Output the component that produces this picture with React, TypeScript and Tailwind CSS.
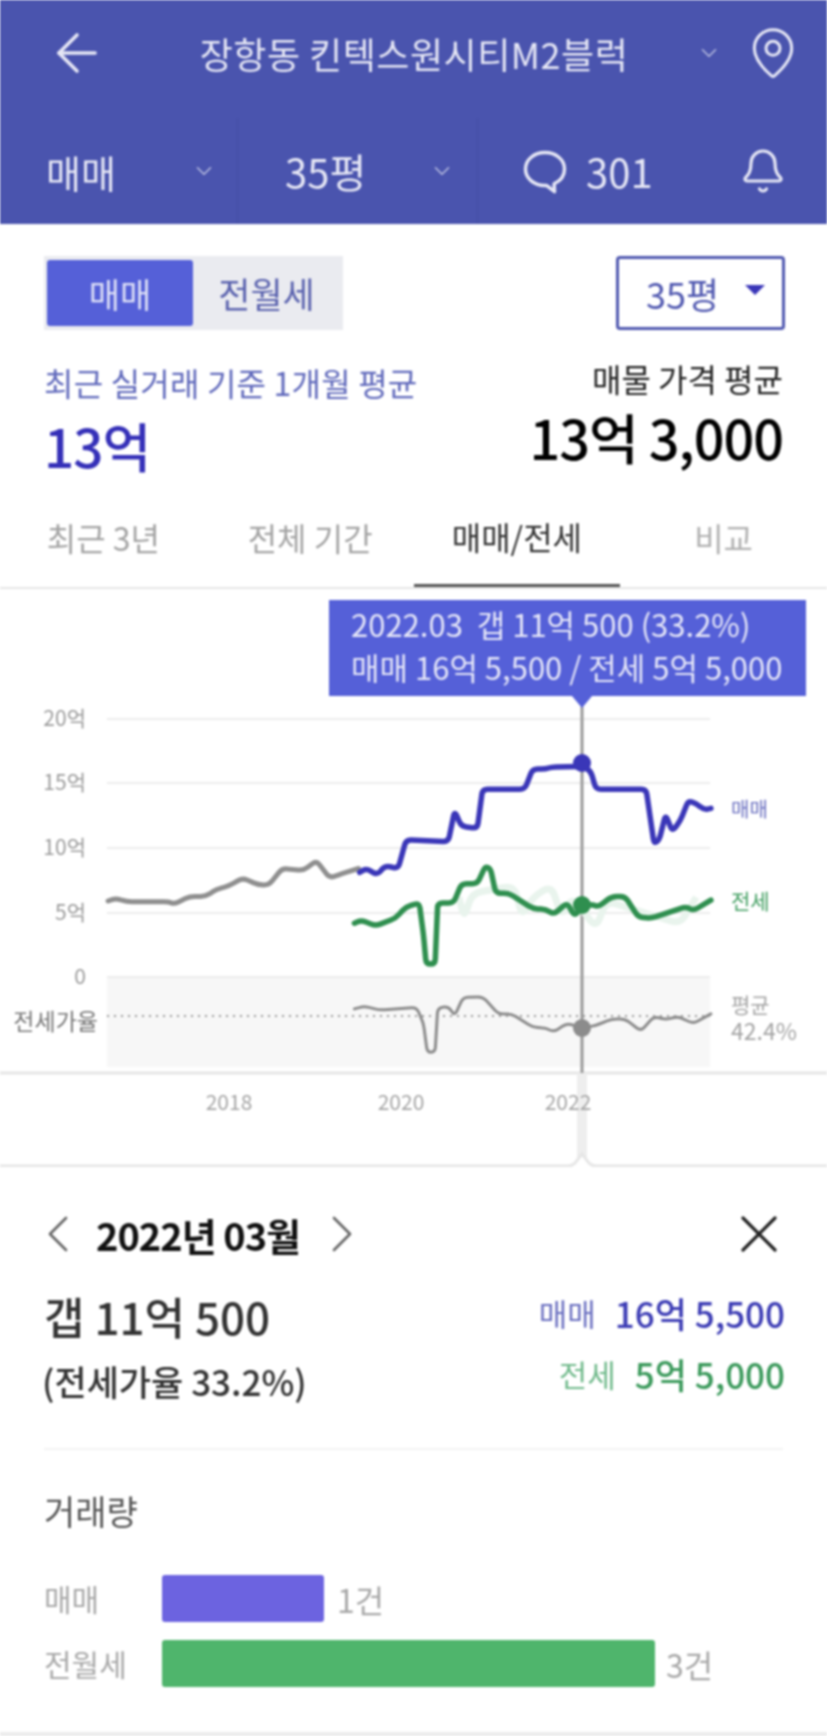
import { ArrowLeft, Bell, ChevronDown, ChevronLeft, ChevronRight, MapPin, X } from "lucide-react";

// chart points are measured off the reference crop, toPath moves them into svg space and rounds the corners
const toPath = (pts: number[][], r = 5) => {
  const p = pts.map(([x, y]) => [x * 0.5274, y * 0.3827 + 2]);
  let d = `M${p[0][0].toFixed(1)} ${p[0][1].toFixed(1)}`;
  for (let i = 1; i < p.length - 1; i++) {
    const [x, y] = p[i];
    const [ax, ay] = p[i - 1];
    const [bx, by] = p[i + 1];
    const la = Math.hypot(x - ax, y - ay);
    const lb = Math.hypot(bx - x, by - y);
    const ra = Math.min(r, la / 2) / la;
    const rb = Math.min(r, lb / 2) / lb;
    d += `L${(x + (ax - x) * ra).toFixed(1)} ${(y + (ay - y) * ra).toFixed(1)}`;
    d += `Q${x.toFixed(1)} ${y.toFixed(1)} ${(x + (bx - x) * rb).toFixed(1)} ${(y + (by - y) * rb).toFixed(1)}`;
  }
  const last = p[p.length - 1];
  return `${d}L${last[0].toFixed(1)} ${last[1].toFixed(1)}`;
};

const blueLine = [[682,735],[695,725],[715,742],[730,718],[755,725],[770,650],[850,655],[862,575],[875,615],[905,620],[915,518],[995,518],[1010,465],[1035,465],[1045,460],[1105,458],[1120,470],[1130,518],[1225,518],[1240,660],[1250,650],[1262,585],[1275,628],[1290,600],[1305,548],[1320,555],[1335,572],[1348,568]];
const grayLine = [[205,810],[220,803],[240,812],[320,812],[330,818],[360,798],[390,798],[410,780],[435,770],[460,750],[490,768],[510,768],[535,725],[575,730],[600,705],[625,750],[650,738],[680,725]];
const greenLine = [[672,868],[685,860],[712,875],[750,855],[770,825],[795,815],[803,900],[808,975],[825,975],[830,815],[860,815],[875,765],[905,765],[920,720],[930,725],[940,790],[965,790],[1010,830],[1035,832],[1050,845],[1075,815],[1090,850],[1105,820],[1125,820],[1135,825],[1160,798],[1185,798],[1210,852],[1235,855],[1300,825],[1315,835],[1348,808]];
const greenShade = [[870,800],[880,855],[895,790],[975,770],[990,850],[1010,800],[1045,770],[1065,850],[1085,800],[1130,880],[1150,810],[1290,870],[1320,800]];
const ratioLine = [[672,1092],[690,1085],[720,1095],[790,1088],[803,1130],[810,1205],[825,1205],[830,1090],[850,1085],[862,1110],[878,1062],[915,1060],[945,1105],[970,1105],[1010,1140],[1035,1142],[1050,1152],[1075,1130],[1105,1142],[1130,1135],[1160,1118],[1185,1118],[1215,1150],[1240,1112],[1262,1120],[1285,1112],[1315,1130],[1348,1105]];

const Chart = () => (
  <svg width="827" height="578" className="block font-['Noto_Sans_CJK_KR',sans-serif]">
    <rect x="107" y="388" width="603" height="90" fill="#f7f7f7" />
    {[130, 194, 259, 324, 388].map((y) => (
      <line key={y} x1="107" x2="710" y1={y} y2={y} stroke="#ececec" strokeWidth="2" />
    ))}
    <line x1="107" x2="710" y1="427" y2="427" stroke="#999" strokeWidth="2" strokeDasharray="2 5" />
    <line x1="0" x2="827" y1="484" y2="484" stroke="#e6e6e6" strokeWidth="3" />

    <rect x="577" y="484" width="10" height="84" fill="#eeeeee" />
    <path d="M0 577H568Q574 577 578 570L582 565L586 570Q590 577 596 577H827" fill="none" stroke="#e6e6e6" strokeWidth="3" />

    <g fill="#9a9a9a" fontSize="21" textAnchor="end">
      <text x="86" y="137">20억</text>
      <text x="86" y="201">15억</text>
      <text x="86" y="266">10억</text>
      <text x="86" y="331">5억</text>
      <text x="86" y="395">0</text>
    </g>
    <text x="98" y="441" fontSize="23" fill="#777" textAnchor="end">전세가율</text>
    <g fill="#a3a3a3" fontSize="21" textAnchor="middle">
      <text x="229" y="521">2018</text>
      <text x="401" y="521">2020</text>
      <text x="568" y="521">2022</text>
    </g>
    <text x="731" y="228" fontSize="20" fill="#6a6fc0">매매</text>
    <text x="731" y="320" fontSize="21" fill="#3f9d5f">전세</text>
    <text x="731" y="424" fontSize="21" fill="#a3a3a3">평균</text>
    <text x="731" y="451" fontSize="23" fill="#a3a3a3">42.4%</text>

    <line x1="582" x2="582" y1="118" y2="484" stroke="#999" strokeWidth="3" />

    <path d={toPath(greenShade, 10)} fill="none" stroke="#e9f4ed" strokeWidth="7" strokeLinejoin="round" />
    <path d={toPath(grayLine)} fill="none" stroke="#8f8f8f" strokeWidth="5" strokeLinecap="round" />
    <path d={toPath(blueLine)} fill="none" stroke="#3a36b8" strokeWidth="5.5" strokeLinecap="round" />
    <path d={toPath(greenLine)} fill="none" stroke="#2f8f4f" strokeWidth="5.5" strokeLinecap="round" />
    <path d={toPath(ratioLine)} fill="none" stroke="#8c8c8c" strokeWidth="3" strokeLinecap="round" />

    <circle cx="582" cy="174" r="9" fill="#3a36b8" />
    <circle cx="582" cy="316" r="9" fill="#2f8f4f" />
    <circle cx="582" cy="439" r="9" fill="#8c8c8c" />
  </svg>
);

const App = () => (
  <div className="relative w-[827px] h-[1736px] overflow-hidden bg-white font-['Noto_Sans_CJK_KR',sans-serif] blur-[0.9px]">
    <header className="h-[224px] bg-[#4a54ae] text-[#e6e7f5]">
      <div className="flex h-[106px] items-center pl-[46px] pr-[26px]">
        <ArrowLeft className="size-[62px] shrink-0" strokeWidth={1.4} />
        <div className="flex-1 whitespace-nowrap pl-[24px] text-center text-[36px] tracking-[0.5px]">장항동 킨텍스원시티M2블럭</div>
        <ChevronDown className="mr-[23px] size-[26px] shrink-0 text-[#b8bce0]" strokeWidth={1.5} />
        <MapPin className="size-[56px] shrink-0" strokeWidth={1.3} />
      </div>
      <div className="mt-[12px] flex h-[106px] items-center">
        <div className="flex h-full w-[238px] items-center justify-between border-r border-[#444ea4] pl-[46px] pr-[20px]">
          <span className="text-[38px]">매매</span>
          <ChevronDown className="size-[26px] text-[#b8bce0]" strokeWidth={1.5} />
        </div>
        <div className="flex h-full w-[240px] items-center justify-between border-r border-[#444ea4] pl-[47px] pr-[22px]">
          <span className="text-[40px]">35평</span>
          <ChevronDown className="size-[26px] text-[#b8bce0]" strokeWidth={1.5} />
        </div>
        <div className="flex flex-1 items-center pl-[41px] pr-[40px]">
          <svg viewBox="0 0 24 24" fill="none" stroke="currentColor" strokeWidth="1.6" strokeLinejoin="round" className="size-[52px]">
            <path d="M12 3.5c-5 0-9 3.2-9 7.6s4 7.6 9 7.6h.8l3.6 2.8-.2-3.6c2.9-1.3 4.8-3.8 4.8-6.8 0-4.4-4-7.6-9-7.6z" />
          </svg>
          <span className="ml-[15px] text-[40px]">301</span>
          <Bell className="ml-auto size-[48px]" strokeWidth={1.6} />
        </div>
      </div>
    </header>

    <section className="px-[44px] pt-[32px]">
      <div className="flex items-start justify-between">
        <div className="flex h-[74px] w-[299px] bg-[#eaebf0] px-[3px] py-[4px]">
          <div className="flex w-[146px] items-center justify-center rounded-[3px] bg-[#5560d8] text-[34px] text-[#dfe1f7]">매매</div>
          <div className="flex flex-1 items-center justify-center text-[35px] text-[#5a62ae]">전월세</div>
        </div>
        <div className="mr-[-2px] flex h-[74px] w-[169px] items-center rounded-[4px] border-[3px] border-[#5058b0] pl-[27px] pr-[17px] text-[36px] text-[#5058b0]">
          <span>35평</span>
          <span className="ml-auto mb-[6px] h-0 w-0 border-x-[10px] border-t-[10px] border-x-transparent border-t-[#3a36b8]" />
        </div>
      </div>
      <div className="mt-[30px] flex items-start justify-between">
        <div>
          <div className="h-[44px] whitespace-nowrap text-[32px] leading-[44px] tracking-[0.2px] text-[#5f68bb]">최근 실거래 기준 1개월 평균</div>
          <div className="mt-[11px] h-[60px] text-[53px] font-medium leading-[60px] tracking-[-1px] text-[#3530b8]">13억</div>
        </div>
        <div className="text-right">
          <div className="mt-[-4px] h-[44px] whitespace-nowrap text-[32px] leading-[44px] text-[#222]">매물 가격 평균</div>
          <div className="mt-[7px] h-[60px] whitespace-nowrap text-[54px] font-medium leading-[60px] tracking-[-1px] text-black">13억 3,000</div>
        </div>
      </div>
    </section>

    <nav className="mt-[12px] flex h-[102px] border-b-2 border-[#e6e6e6] text-[32px]">
      <div className="flex flex-1 items-center justify-center text-[#a3a3a3]">최근 3년</div>
      <div className="flex flex-1 items-center justify-center text-[#a3a3a3]">전체 기간</div>
      <div className="flex flex-1 items-center justify-center border-b-[3px] border-[#555] text-[#333]">매매/전세</div>
      <div className="flex flex-1 items-center justify-center text-[#b0b0b0]">비교</div>
    </nav>

    <div className="relative">
      <Chart />
      <div className="absolute left-[329px] top-[11px] h-[96px] w-[477px] bg-[#5560d8] pl-[22px] text-[31px] leading-[43px] text-[#e6e7f8]">
        <div className="pt-[2px] whitespace-nowrap">2022.03&nbsp; 갭 11억 500 (33.2%)</div>
        <div className="whitespace-nowrap">매매 16억 5,500 / 전세 5억 5,000</div>
        <span className="absolute left-[243px] top-[96px] h-0 w-0 border-x-[10px] border-t-[12px] border-x-transparent border-t-[#5560d8]" />
      </div>
    </div>

    <section className="px-[44px] pt-[39px]">
      <div className="flex h-[56px] items-center">
        <ChevronLeft className="ml-[-18px] size-[64px] shrink-0 text-[#666]" strokeWidth={1} />
        <span className="ml-[6px] whitespace-nowrap text-[38px] font-bold tracking-[-1px] text-[#111]">2022년 03월</span>
        <ChevronRight className="ml-[10px] size-[64px] shrink-0 text-[#666]" strokeWidth={1} />
        <X className="ml-auto mr-[-8px] size-[64px] shrink-0 text-[#222]" strokeWidth={1.2} />
      </div>
      <div className="mt-[24px] flex justify-between">
        <div>
          <div className="h-[60px] text-[44px] font-medium leading-[60px] text-[#333]">갭 11억 500</div>
          <div className="ml-[-2px] mt-[13px] whitespace-nowrap text-[35px] font-medium leading-[44px] text-[#333]">(전세가율 33.2%)</div>
        </div>
        <div className="mr-[-2px] mt-[-1px] text-right">
          <div className="flex h-[56px] items-center justify-end">
            <span className="text-[31px] text-[#6a6fc0]">매매</span>
            <span className="ml-[19px] whitespace-nowrap text-[35px] font-medium text-[#3d3db5]">16억 5,500</span>
          </div>
          <div className="mt-[5px] flex h-[56px] items-center justify-end">
            <span className="text-[31px] text-[#6fb98a]">전세</span>
            <span className="ml-[19px] whitespace-nowrap text-[35px] font-medium text-[#3c9a5c]">5억 5,000</span>
          </div>
        </div>
      </div>
      <div className="mt-[45px] border-t-2 border-[#f3f3f3] pt-[38px] text-[34px] leading-[46px] text-[#555]">거래량</div>
      <div className="mt-[41px] flex flex-col gap-[18px] text-[30px] text-[#a8a8a8]">
        <div className="flex h-[47px] items-center">
          <span className="w-[118px]">매매</span>
          <div className="h-full w-[162px] rounded-[3px] bg-[#6c63e0]" />
          <span className="ml-[13px] text-[32px]">1건</span>
        </div>
        <div className="flex h-[47px] items-center">
          <span className="w-[118px]">전월세</span>
          <div className="h-full w-[493px] rounded-[3px] bg-[#4fb56c]" />
          <span className="ml-[11px] text-[32px]">3건</span>
        </div>
      </div>
    </section>
    <div className="absolute bottom-0 left-0 h-[4px] w-full bg-[#ececec]" />
  </div>
);

export default App;
